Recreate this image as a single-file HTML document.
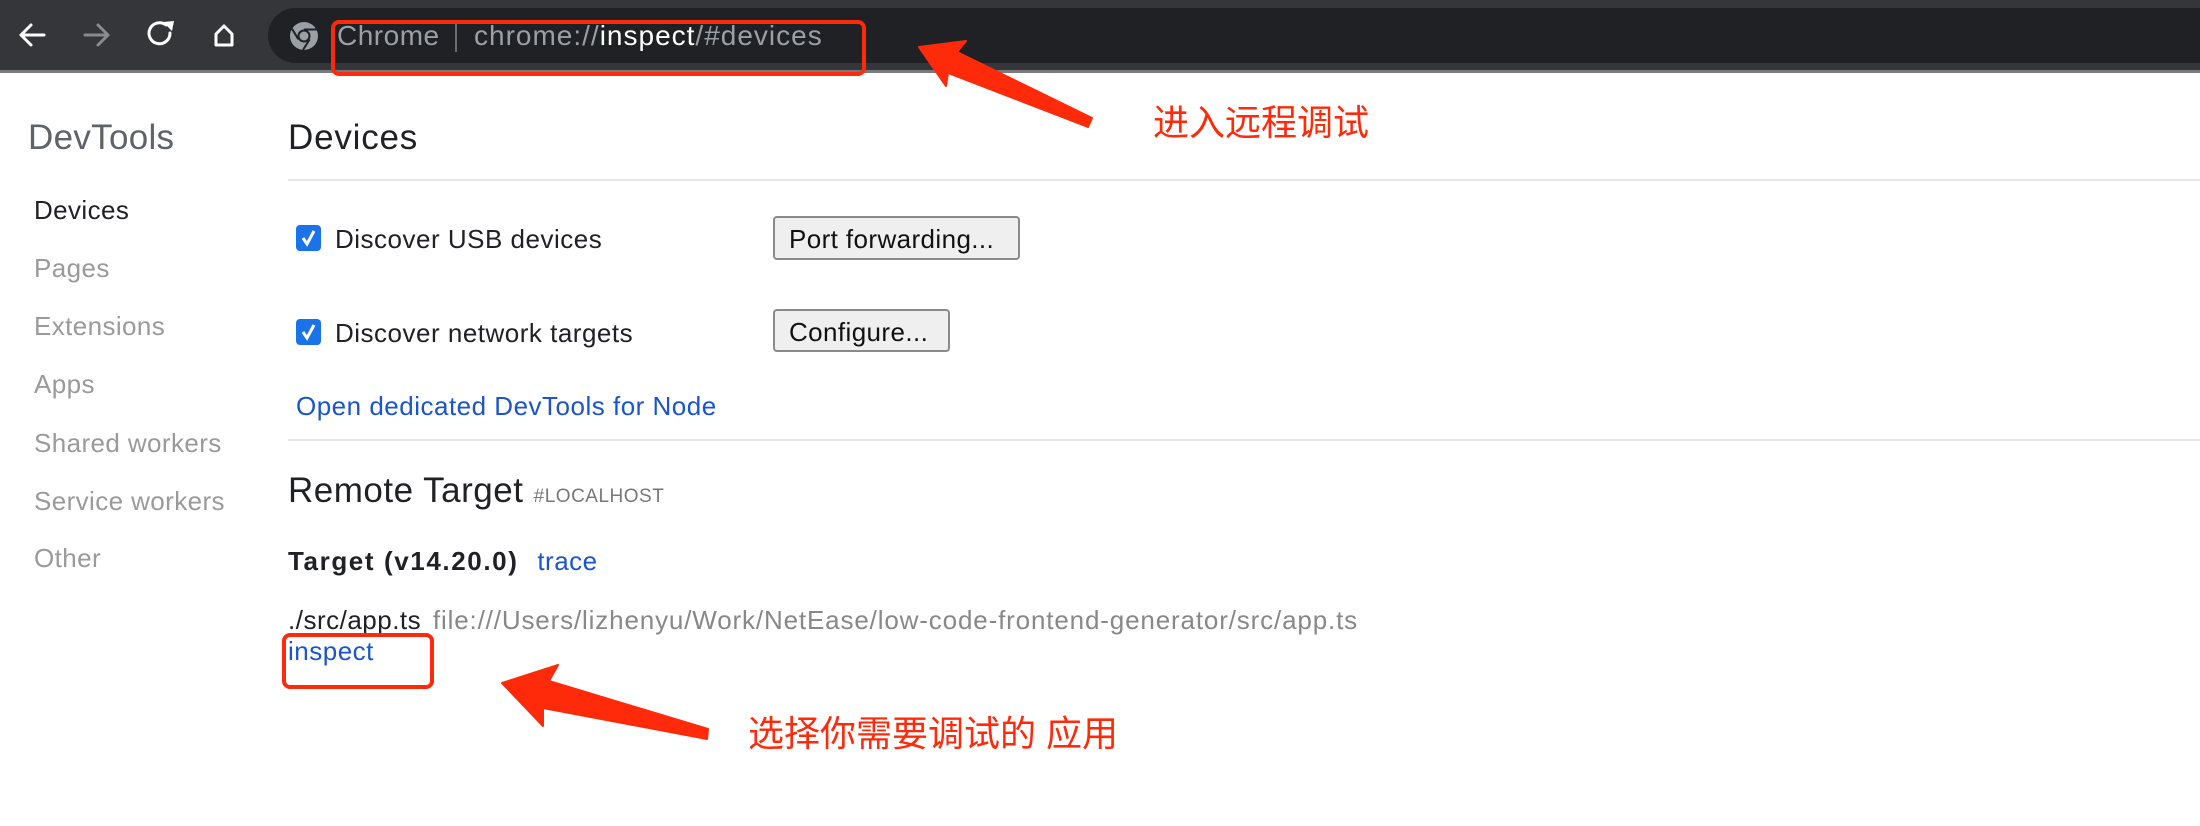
<!DOCTYPE html>
<html><head><meta charset="utf-8"><style>
*{margin:0;padding:0;box-sizing:border-box}
body{width:2200px;height:826px;background:#fff;position:relative;overflow:hidden;font-family:"Liberation Sans","Noto Sans CJK SC",sans-serif}
.a{position:absolute;white-space:nowrap;line-height:40px}
.side{font-size:26px;letter-spacing:0.4px;color:#9a9a9a;left:34px}
.body{font-size:26px;letter-spacing:0.5px;color:#202124}
.lnk{color:#1a55cc}
.btn{position:absolute;background:#efefef;border:2px solid #8a8a8a;border-radius:4px;font-size:26px;letter-spacing:0.4px;color:#111;line-height:42px;padding-left:14px}
.cb{position:absolute;left:296px;width:25px;height:26px;background:#1a73e8;border-radius:4px}
.hr{position:absolute;left:288px;right:0;height:2px;background:#e6e6e6}
.cn{font-size:36px;color:#ff2a0a}
</style></head><body>
<div style="position:absolute;left:0;top:0;width:2200px;height:70px;background:#35363a"></div>
<div style="position:absolute;left:0;top:70px;width:2200px;height:3px;background:#7a7a7c"></div>
<div style="position:absolute;left:268px;top:8px;width:2000px;height:55px;background:#202124;border-radius:28px"></div>
<svg style="position:absolute;left:0;top:0" width="260" height="70">
<g fill="none" stroke-width="3" stroke-linecap="round" stroke-linejoin="round">
<path d="M21 35H44M31 25L21 35L31 45" stroke="#fff"/>
<path d="M85 35H108M98 25L108 35L98 45" stroke="#8a8b8d"/>
<path d="M170 33A10.5 10.5 0 1 1 166 25" stroke="#fff"/>
<path d="M216 34L224 26L232 34V45H216Z" stroke="#fff"/>
</g>
<path d="M163 22L174 21L172 31Z" fill="#fff"/>
</svg>
<svg style="position:absolute;left:289px;top:21px" width="30" height="30" viewBox="0 0 30 30">
<circle cx="15" cy="15" r="14" fill="#9aa0a6"/><circle cx="15" cy="15" r="6.5" fill="#202124"/><circle cx="15" cy="15" r="4.5" fill="#9aa0a6"/>
<path d="M15 8.5H28M9.4 18.3L2.5 7M20.6 18.3L14 29" stroke="#202124" stroke-width="2"/>
</svg>
<div class="a" style="left:337px;top:16px;font-size:28px;letter-spacing:0.5px;color:#9aa0a6">Chrome</div>
<div style="position:absolute;left:455px;top:22px;width:2px;height:30px;background:#6a6d70"></div>
<div class="a" style="left:474px;top:16px;font-size:28px;letter-spacing:1px;color:#9aa0a6">chrome://<span style="color:#fff">inspect</span>/#devices</div>
<div style="position:absolute;left:331px;top:20px;width:535px;height:56px;border:4px solid #ff2a0a;border-radius:8px"></div>
<svg style="position:absolute;left:0;top:0" width="2200" height="826">
<polygon points="919,47 966,41 957,52 1092,118 1088,127 948,73 946,86" fill="#ff2a0a" stroke="#ff2a0a" stroke-width="2" stroke-linejoin="round"/>
<polygon points="502,683 558,665 549,681 708,729 707,739 543,708 543,726" fill="#ff2a0a" stroke="#ff2a0a" stroke-width="2" stroke-linejoin="round"/>
</svg>
<div class="a cn" style="left:1153px;top:103px">进入远程调试</div>
<div class="a" style="left:28px;top:118px;font-size:35px;letter-spacing:0.3px;color:#5f6368">DevTools</div>
<div class="a" style="left:288px;top:118px;font-size:35px;letter-spacing:0.8px;color:#202124">Devices</div>
<div class="a side" style="top:190px;color:#202124">Devices</div>
<div class="a side" style="top:248px">Pages</div>
<div class="a side" style="top:306px">Extensions</div>
<div class="a side" style="top:364px">Apps</div>
<div class="a side" style="top:423px">Shared workers</div>
<div class="a side" style="top:481px">Service workers</div>
<div class="a side" style="top:538px">Other</div>
<div class="hr" style="top:179px"></div>
<div class="cb" style="top:225px"></div>
<svg style="position:absolute;left:296px;top:225px" width="25" height="26"><path d="M7 13L11 19L18 6" fill="none" stroke="#fff" stroke-width="3"/></svg>
<div class="a body" style="left:335px;top:219px">Discover USB devices</div>
<div class="btn" style="left:773px;top:216px;width:247px;height:44px">Port forwarding...</div>
<div class="cb" style="top:319px"></div>
<svg style="position:absolute;left:296px;top:319px" width="25" height="26"><path d="M7 13L11 19L18 6" fill="none" stroke="#fff" stroke-width="3"/></svg>
<div class="a body" style="left:335px;top:313px">Discover network targets</div>
<div class="btn" style="left:773px;top:309px;width:177px;height:43px">Configure...</div>
<div class="a body lnk" style="left:296px;top:386px">Open dedicated DevTools for Node</div>
<div class="hr" style="top:439px"></div>
<div class="a" style="left:288px;top:471px;font-size:35px;letter-spacing:0.5px;color:#202124">Remote Target <span style="font-size:19px;color:#777">#LOCALHOST</span></div>
<div class="a body" style="left:288px;top:541px;font-weight:bold;letter-spacing:1.6px">Target (v14.20.0) <span class="lnk" style="font-weight:normal;margin-left:10px;letter-spacing:0.5px">trace</span></div>
<div class="a body" style="left:288px;top:600px">./src/app.ts <span style="color:#888;margin-left:4px;letter-spacing:0.85px">file:///Users/lizhenyu/Work/NetEase/low-code-frontend-generator/src/app.ts</span></div>
<div class="a body lnk" style="left:288px;top:631px">inspect</div>
<div style="position:absolute;left:282px;top:633px;width:152px;height:56px;border:4px solid #ff2a0a;border-radius:8px"></div>
<div class="a cn" style="left:748px;top:714px">选择你需要调试的 应用</div>
</body></html>
